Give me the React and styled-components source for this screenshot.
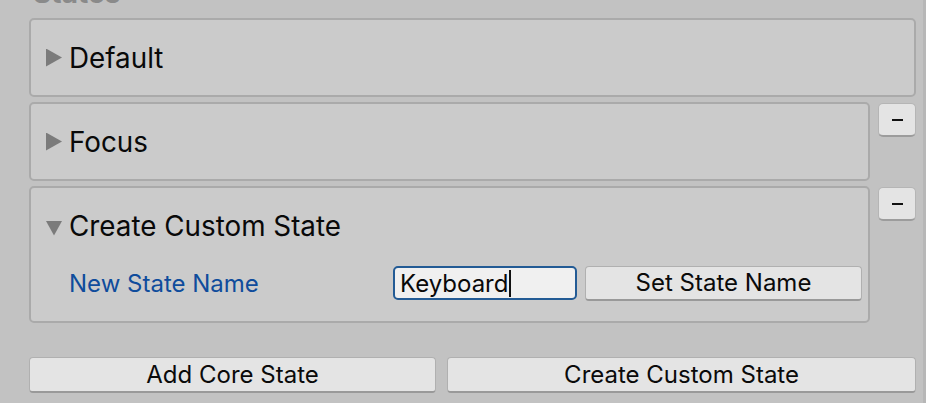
import React from "react";
import styled, { createGlobalStyle } from "styled-components";

const Global = createGlobalStyle`
  html, body { margin: 0; padding: 0; background: #c2c2c2; overflow: hidden; }
  body { font-family: Inter, "Noto Sans", sans-serif; color: #090909; }
  * { box-sizing: border-box; }
`;

const Page = styled.div`
  display: flex;
  width: 926px;
  height: 403px;
  background: #c2c2c2;
  overflow: hidden;
`;

const Main = styled.div`
  flex: 1;
  display: flex;
  flex-direction: column;
  padding: 0 7px 0 29px;
`;

const Edge = styled.div`
  width: 3px;
  background: #b7b7b7;
`;

const SectionTitle = styled.div`
  height: 28px;
  line-height: 28px;
  margin: -21px 0 11px 4px;
  font-size: 28px;
  font-weight: 700;
  color: #8a8a8a;
`;

const Row = styled.div`
  display: flex;
  align-items: flex-start;
  gap: 8px;
  margin-bottom: ${(p) => p.$mb ?? 5}px;
`;

const Box = styled.div`
  flex: 1;
  background: #cbcbcb;
  border: 2px solid #aaaaaa;
  border-radius: 5px;
  padding-bottom: ${(p) => p.$pb ?? 0}px;
`;

const Header = styled.div`
  height: 75px;
  display: flex;
  align-items: center;
  gap: 7px;
  padding-left: 15px;
  font-size: 27.8px;
`;

const Arrow = styled.span`
  width: 16px;
  height: 18px;
  display: inline-block;
  background: #7b7b7b;
  clip-path: ${(p) =>
    p.$open
      ? "polygon(0 20%, 100% 20%, 50% 100%)"
      : "polygon(0 0, 100% 50%, 0 100%)"};
  margin-top: ${(p) => (p.$open ? 2 : 0)}px;
`;

const FieldRow = styled.div`
  height: 40px;
  display: flex;
  align-items: center;
  padding: 0 6px 0 38px;
`;

const Label = styled.div`
  width: 324px;
  font-size: 24px;
  color: #0f4c9c;
`;

const TextInput = styled.div`
  width: 184px;
  height: 34px;
  display: flex;
  align-items: center;
  padding-left: 5px;
  background: #f0f0f0;
  border: 2px solid #235b95;
  border-radius: 5px;
  font-size: 24px;
  margin-right: 8px;
`;

const Caret = styled.span`
  width: 2px;
  height: 27px;
  background: #111;
  margin-left: 1px;
`;

const Button = styled.div`
  flex: ${(p) => p.$flex ?? 1};
  height: ${(p) => p.$h ?? 36}px;
  display: flex;
  align-items: center;
  justify-content: center;
  background: #e4e4e4;
  border: 1px solid #b0b0b0;
  border-bottom: 2px solid #999999;
  border-radius: 4px;
  font-size: 24px;
  color: #0a0a0a;
`;

const MinusButton = styled.div`
  width: 38px;
  height: 34px;
  margin-top: 1px;
  display: flex;
  align-items: center;
  justify-content: center;
  background: #e4e4e4;
  border: 1px solid #b5b5b5;
  border-bottom: 2px solid #9c9c9c;
  border-radius: 5px;
`;

const MinusGlyph = styled.span`
  width: 11px;
  height: 2px;
  background: #111;
`;

const Footer = styled.div`
  display: flex;
  gap: 11px;
  margin-top: 34px;
`;

export default function App() {
  return (
    <>
      <Global />
      <Page>
        <Main>
          <SectionTitle>States</SectionTitle>
          <Row>
            <Box>
              <Header>
                <Arrow />
                Default
              </Header>
            </Box>
          </Row>
          <Row>
            <Box>
              <Header>
                <Arrow />
                Focus
              </Header>
            </Box>
            <MinusButton>
              <MinusGlyph />
            </MinusButton>
          </Row>
          <Row $mb={0}>
            <Box $pb={18}>
              <Header>
                <Arrow $open />
                Create Custom State
              </Header>
              <FieldRow>
                <Label>New State Name</Label>
                <TextInput>
                  Keyboard
                  <Caret />
                </TextInput>
                <Button $h={35}>Set State Name</Button>
              </FieldRow>
            </Box>
            <MinusButton>
              <MinusGlyph />
            </MinusButton>
          </Row>
          <Footer>
            <Button $flex={406}>Add Core State</Button>
            <Button $flex={468}>Create Custom State</Button>
          </Footer>
        </Main>
        <Edge />
      </Page>
    </>
  );
}
